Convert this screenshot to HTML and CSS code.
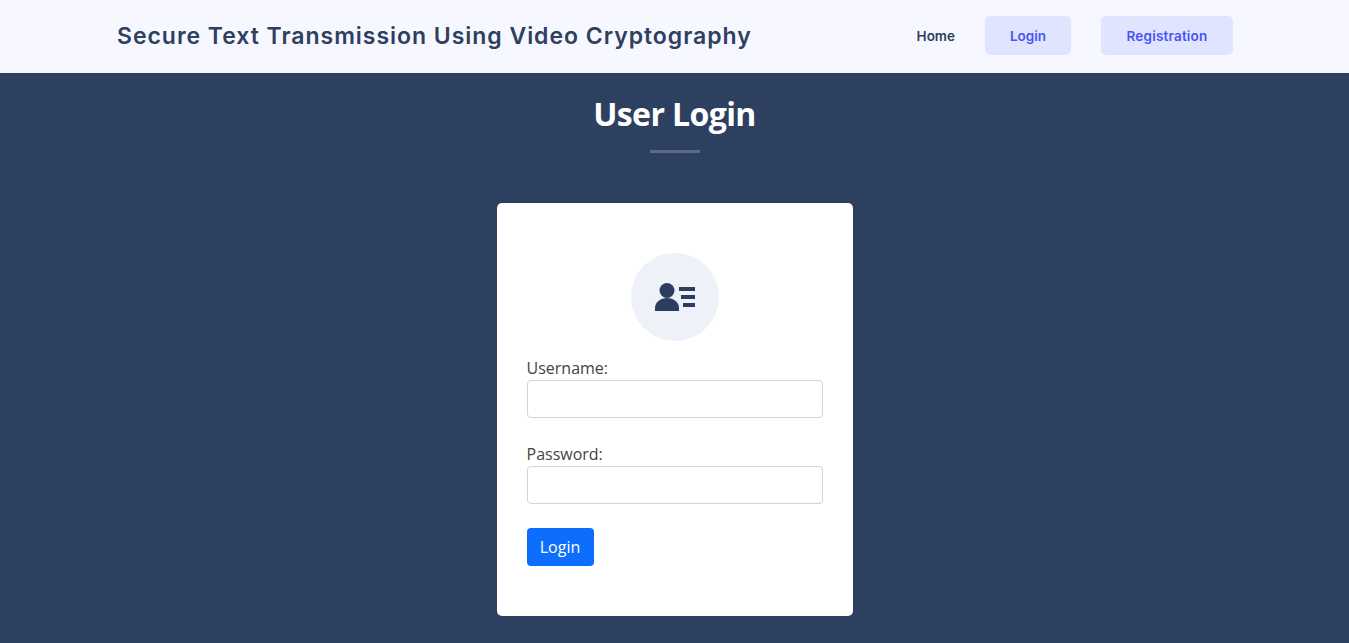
FILE: index.html
```html
<!DOCTYPE html>
<html lang="en">
<head>
<meta charset="utf-8">
<title>User Login</title>
<link rel="stylesheet" href="styles.css">
</head>
<body>
<header class="site-header">
  <div class="brand">Secure Text Transmission Using Video Cryptography</div>
  <nav class="nav">
    <a class="nav-link" href="#">Home</a>
    <a class="nav-btn nav-btn-login" href="#">Login</a>
    <a class="nav-btn nav-btn-reg" href="#">Registration</a>
  </nav>
</header>
<main class="main">
  <h1 class="title">User Login</h1>
  <div class="rule"></div>
  <form class="card">
    <div class="avatar">
      <svg width="40" height="28" viewBox="0 0 40 28" aria-hidden="true">
        <circle cx="12" cy="7.500" r="7.500" fill="#2c3e5f"/>
        <path d="M0 28v-3C0 19.500 5 15 12 15S24 19.500 24 25v3z" fill="#2c3e5f"/>
        <rect x="24" y="4" width="16" height="4" fill="#2c3e5f"/>
        <rect x="26" y="12" width="14" height="4" fill="#2c3e5f"/>
        <rect x="28" y="20" width="12" height="4" fill="#2c3e5f"/>
      </svg>
    </div>
    <label class="label" for="u">Username:</label>
    <input class="input" id="u" type="text">
    <label class="label" for="p">Password:</label>
    <input class="input" id="p" type="password">
    <button class="submit" type="button">Login</button>
  </form>
</main>
</body>
</html>
```

FILE: styles.css
```css
* { box-sizing: border-box; }
html, body { margin: 0; height: 100%; }
body {
  background: #2e4060;
  font-family: "Open Sans", "Noto Sans", sans-serif;
  overflow: hidden;
}
.site-header {
  height: 73px;
  background: #f7f8ff;
  display: flex;
  align-items: center;
  justify-content: space-between;
  padding: 0 116px 3px 117px;
}
.brand {
  font-family: Inter, sans-serif;
  font-weight: 600;
  font-size: 23px;
  letter-spacing: 0.970px;
  color: #2e4060;
  white-space: nowrap;
  padding-top: 1px;
}
.nav { display: flex; align-items: center; }
.nav-link, .nav-btn {
  font-family: Inter, sans-serif;
  font-size: 13.500px;
  font-weight: 600;
  text-decoration: none;
  padding-top: 1px;
}
.nav-link { color: #2e4060; margin-right: 30px; }
.nav-btn {
  height: 39px;
  display: flex;
  align-items: center;
  justify-content: center;
  background: #e0e4fe;
  color: #4654f5;
  border-radius: 5px;
}
.nav-btn-login { width: 86px; margin-right: 30px; }
.nav-btn-reg { width: 132px; letter-spacing: 0.200px; }
.main { display: flex; flex-direction: column; align-items: center; }
.title {
  margin: 19px 0 0;
  font-family: "Open Sans", sans-serif;
  font-weight: 700;
  font-size: 32px;
  letter-spacing: -0.600px;
  line-height: 44px;
  color: #fff;
}
.rule {
  width: 50px;
  height: 3px;
  margin-top: 14px;
  background: #5b6a85;
}
.card {
  width: 356px;
  height: 413px;
  margin-top: 50px;
  padding: 50px 30px;
  background: #fff;
  border-radius: 5px;
  display: flex;
  flex-direction: column;
}
.avatar {
  flex: none;
  width: 88px;
  height: 88px;
  border-radius: 50%;
  background: #eef1f8;
  align-self: center;
  display: flex;
  align-items: center;
  justify-content: center;
  margin-bottom: 14px;
}
.label {
  flex: none;
  font-size: 16px;
  line-height: 24px;
  color: #444;
  height: 25px;
  padding-top: 1px;
}
.input {
  flex: none;
  height: 38px;
  border: 1px solid #ced4da;
  border-radius: 4px;
  background: #fff;
  padding: 6px 12px;
  margin-bottom: 23px;
}
.submit {
  flex: none;
  width: 67px;
  height: 38px;
  margin-top: 1px;
  border: 0;
  border-radius: 4px;
  background: #0d6efd;
  color: #fff;
  font-family: "Open Sans", sans-serif;
  font-size: 16px;
  padding: 0;
}
```
